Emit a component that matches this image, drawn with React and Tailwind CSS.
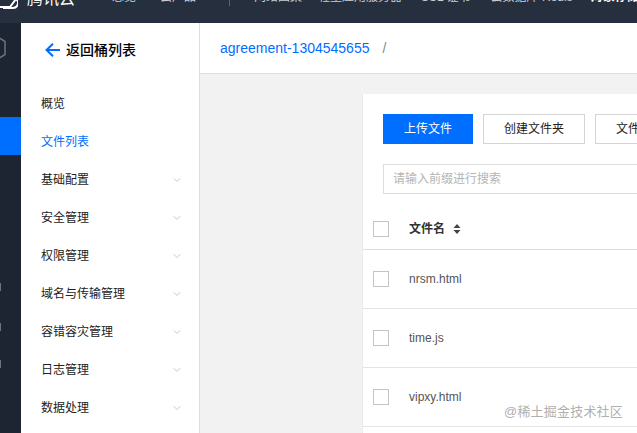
import { ChevronDown } from 'lucide-react';

const menus = ['基础配置', '安全管理', '权限管理', '域名与传输管理', '容错容灾管理', '日志管理', '数据处理'];
const files = ['nrsm.html', 'time.js', 'vipxy.html'];
const nav2 = [
  ['网络图集', 'mr-[16px]'],
  ['轻量应用服务器', 'mr-[19px]'],
  ['SSL 证书', 'mr-[20px]'],
  ['云数据库 Redis', 'mr-[18px]'],
];

function Box() {
  return <div className="w-4 h-4 border border-[#c4c4c4] bg-white shrink-0" />;
}

export default function App() {
  return (
    <div className="relative w-[637px] h-[433px] overflow-hidden flex flex-col bg-[#f2f2f2] text-[12px] font-['Liberation_Sans','Noto_Sans_CJK_SC',sans-serif]">
      <header className="h-[23px] shrink-0 bg-[#262f3e] text-[#c9ced6] flex items-start overflow-hidden whitespace-nowrap leading-[14px]">
        <div className="w-[112px] shrink-0 flex items-start">
          <svg className="-mt-[8px] -ml-[2px] shrink-0" width="20" height="18" viewBox="0 0 20 18" fill="none" stroke="#fff" strokeWidth="2">
            <path d="M2 15h10l6-8" />
            <path d="M18 7a5 5 0 0 1-3 9H5" />
          </svg>
          <span className="ml-[9px] -mt-[11px] text-[16px] leading-[20px] text-white">腾讯云</span>
        </div>
        <span className="w-[48px] -mt-[10px] shrink-0">总览</span>
        <span className="w-[69px] -mt-[10px] shrink-0">云产品</span>
        <div className="w-px h-[6px] bg-[#59616e] mr-[24px] shrink-0" />
        {nav2.map(([label, gap]) => (
          <span key={label} className={`${gap} -mt-[10px] shrink-0`}>{label}</span>
        ))}
        <span className="-mt-[10px] text-white font-bold shrink-0">对象存储</span>
      </header>
      <div className="flex flex-1 min-h-0">
        <aside className="w-[21px] shrink-0 bg-[#1e2532] flex flex-col overflow-hidden">
          <svg className="mt-[12px] -ml-[15px] shrink-0" width="22" height="26" viewBox="0 0 22 26" fill="none" stroke="#6c7380" strokeWidth="1.5">
            <path d="M11 1l9 5.500v13l-9 5.500-9-5.500v-13z" />
          </svg>
          <div className="w-full h-[38px] bg-[#006eff] mt-[56px] shrink-0" />
          <div className="w-px h-[8px] bg-[#6c7380] mt-[128px] shrink-0" />
          <div className="w-px h-[8px] bg-[#6c7380] mt-[32px] shrink-0" />
          <div className="w-px h-[8px] bg-[#6c7380] mt-[29px] shrink-0" />
        </aside>
        <nav className="w-[179px] shrink-0 bg-white border-r border-[#dddddd]">
          <div className="h-[54px] flex items-center pl-[24px] gap-[6px] text-[14px] text-black font-medium">
            <svg width="15" height="14" viewBox="0 0 15 14" fill="none" stroke="#006eff" strokeWidth="2">
              <path d="M15 7H2M8 .700L1.500 7 8 13.300" />
            </svg>
            返回桶列表
          </div>
          <div className="pl-[20px] pr-[16px] pt-[8px] text-[#222]">
            <div className="h-[38px] flex items-center">概览</div>
            <div className="h-[38px] flex items-center text-[#006eff]">文件列表</div>
            {menus.map(label => (
              <div key={label} className="h-[38px] flex items-center justify-between">
                {label}
                <ChevronDown size={12} strokeWidth={1.5} className="text-[#b5b5b5]" />
              </div>
            ))}
          </div>
        </nav>
        <main className="flex-1 min-w-0 flex flex-col">
          <div className="h-[51px] shrink-0 bg-white border-b border-[#dddddd] flex items-center pl-[20px] text-[14px] text-[#006eff] whitespace-nowrap">
            agreement-1304545655
            <span className="ml-[13px] text-[#888]">/</span>
          </div>
          <div className="flex-1 min-h-0 pl-[163px] pt-[20px] overflow-hidden">
            <section className="bg-white w-[300px] h-[400px] shadow-[-1px_0_0_#ececec]">
              <div className="flex gap-[10px] pl-[20px] pt-[20px] whitespace-nowrap">
                <button className="w-[90px] h-[30px] bg-[#006eff] text-white shrink-0">上传文件</button>
                <button className="w-[102px] h-[30px] border border-[#d5d5d5] text-[#222] shrink-0">创建文件夹</button>
                <button className="w-[90px] h-[30px] border border-[#d5d5d5] text-[#222] shrink-0 text-left pl-[20px]">文件</button>
              </div>
              <div className="ml-[20px] mt-[20px] h-[30px] border border-[#dddddd] border-r-0 flex items-center pl-[9px] text-[#b4b4b4]">请输入前缀进行搜索</div>
              <div className="h-[56px] pt-[15px] border-b border-[#dddddd] flex items-center pl-[10px] gap-[20px] text-[#333] font-bold">
                <Box />
                <div className="flex items-center gap-[8px]">
                  文件名
                  <svg width="8" height="10" viewBox="0 0 8 10" fill="#444">
                    <path d="M4 0l3.500 4H.500zM4 10L.500 6h7z" />
                  </svg>
                </div>
              </div>
              {files.map(name => (
                <div key={name} className="h-[59px] border-b border-[#e4e4e4] flex items-center pl-[10px] gap-[20px] text-[#555]">
                  <Box />
                  {name}
                </div>
              ))}
            </section>
          </div>
        </main>
      </div>
      <div className="absolute left-[504px] top-[404px] text-[13px] leading-[16px] tracking-[0.2px] text-[#b0b0b0]">@稀土掘金技术社区</div>
    </div>
  );
}
